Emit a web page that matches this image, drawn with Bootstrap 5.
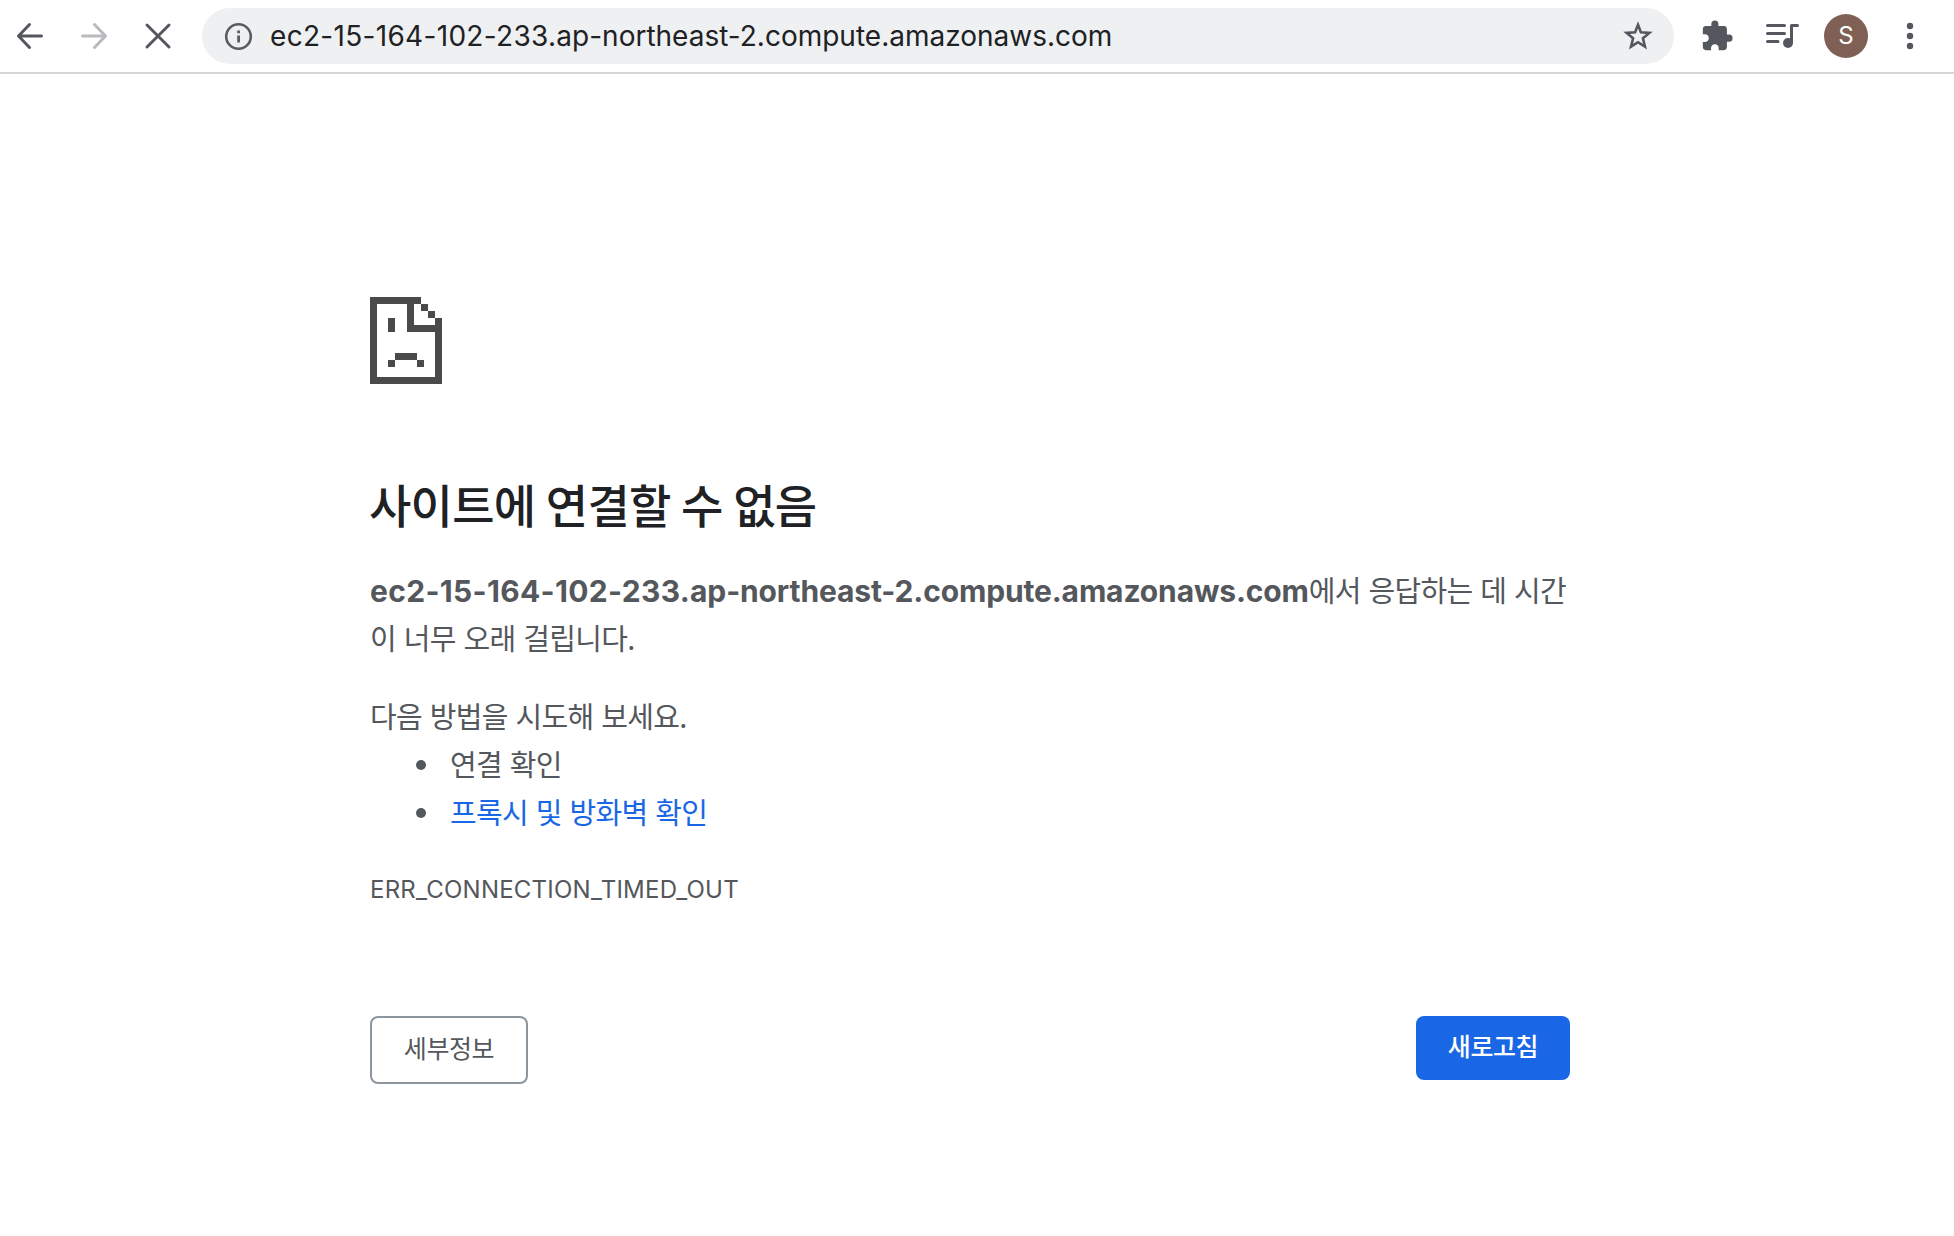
<!DOCTYPE html>
<html lang="ko">
<head>
<meta charset="utf-8">
<title>ec2-15-164-102-233.ap-northeast-2.compute.amazonaws.com</title>
<link href="https://cdn.jsdelivr.net/npm/bootstrap@5.3.0/dist/css/bootstrap.min.css" rel="stylesheet">
<style>
body{font-family:Inter,"Noto Sans CJK KR",sans-serif;color:#54575c;background:#fff;min-height:1236px;overflow:hidden}
.toolbar{height:74px;border-bottom:2px solid #d5d4d9;padding:0 28px 0 14px}
.toolbar svg{display:block;flex:none}
.nav-icons{width:188px;gap:32px}
.omnibox{width:1472px;height:56px;background:#eff0f2;padding:0 20px}
.address{font-size:28px;line-height:56px;color:#202124;margin-left:16px;white-space:nowrap}
.address .ip{letter-spacing:.31px}
.extensions{margin-left:26px}
.avatar{width:44px;height:44px;background:#806055;font-size:24px;line-height:44px;margin:0 26px 0 24px}
.error-main{width:1200px;margin-left:370px;padding-top:223px;font-size:30px;line-height:48px}
.ko{font-family:"Noto Sans CJK KR",sans-serif;font-size:29px;letter-spacing:-.68px;word-spacing:.3px}
.summary{white-space:nowrap}
.summary .ko{line-height:1}
.headline{font-family:"Noto Sans CJK KR",sans-serif;font-size:46px;font-weight:500;line-height:58px;letter-spacing:-.75px;word-spacing:-1.6px;color:#202124;margin:90px 0 35px -1px}
.host{font-weight:700;letter-spacing:-.14px}
.host .ip{letter-spacing:.33px}
.tips-title{margin:28px 0 0}
.tips{list-style:none;padding-left:80px;margin:0 0 31px}
.tips li{display:flex;align-items:center}
.tips li::before{content:"";width:10px;height:10px;border-radius:50%;background:#54575c;margin:3px 24px 0 -34px}
.tips a{color:#1a67e6}
.err-code{font-size:24px;line-height:48px;letter-spacing:.23px}
.actions{margin-top:102px}
.page-btn{font-family:"Noto Sans CJK KR",sans-serif;font-size:25px;letter-spacing:-.4px;line-height:36px;border-radius:8px;padding:0 0 7px}
.btn-details{width:158px;height:68px;border:2px solid #8d959c;color:#54575c}
.btn-reload{width:154px;height:64px;background:#1a67e6;color:#fff;border:0;font-weight:500}
</style>
</head>
<body>
<header class="toolbar d-flex align-items-center">
  <div class="nav-icons d-flex align-items-center">
    <svg width="32" height="32" viewBox="0 0 32 32" fill="none" stroke="#54585e" stroke-width="3" stroke-linecap="round" stroke-linejoin="round"><path d="M27.500 16H4.500M15.500 4.500L4.500 16L15.500 27.500"/></svg>
    <svg width="32" height="32" viewBox="0 0 32 32" fill="none" stroke="#b8babd" stroke-width="3" stroke-linecap="round" stroke-linejoin="round"><path d="M4.500 16H27.500M16.500 4.500L27.500 16L16.500 27.500"/></svg>
    <svg width="32" height="32" viewBox="0 0 32 32" fill="none" stroke="#54585e" stroke-width="3" stroke-linecap="round"><path d="M5 5L27 27M27 5L5 27"/></svg>
  </div>
  <div class="omnibox rounded-pill d-flex align-items-center">
    <svg width="32" height="32" viewBox="0 0 32 32"><circle cx="16.500" cy="16.500" r="12.300" fill="none" stroke="#5a5c60" stroke-width="2.600"/><path d="M15.200 15.500H18V22.500H15.200ZM15.200 10.500H18V13.300H15.200Z" fill="#5a5c60"/></svg>
    <div class="address"><span class="ip">ec2-15-164-102-233.</span>ap-northeast-2.compute.amazonaws.com</div>
    <svg class="ms-auto" width="32" height="32" viewBox="0 0 32 32" fill="none" stroke="#54585e" stroke-width="2.600"><path d="M16 4.800L18.900 12.300L27.400 12.900L20.900 18.200L23 26.700L16 22.200L9 26.700L11.100 18.200L4.600 12.900L13.100 12.300Z"/></svg>
  </div>
  <svg class="extensions" width="34" height="34" viewBox="0 0 24 24" fill="#54585e"><path d="M20.500 11H19V7c0-1.100-.9-2-2-2h-4V3.500a2.500 2.500 0 0 0-5 0V5H4c-1.100 0-1.990.9-1.990 2v3.800H3.500c1.490 0 2.700 1.210 2.700 2.700s-1.210 2.700-2.700 2.700H2V20c0 1.100.9 2 2 2h3.800v-1.500c0-1.490 1.210-2.700 2.700-2.700s2.700 1.210 2.700 2.700V22H17c1.100 0 2-.9 2-2v-4h1.500a2.500 2.500 0 0 0 0-5z"/></svg>
  <svg class="ms-auto" width="36" height="32" viewBox="0 0 36 32"><path d="M3.500 5.500H20.500M3.500 13.500H20.500M3.500 21.500H14M27.500 22V5.500H33.500" fill="none" stroke="#54585e" stroke-width="3" stroke-linecap="round" stroke-linejoin="round"/><circle cx="24" cy="23" r="5" fill="#54585e"/></svg>
  <div class="avatar rounded-circle text-white text-center">S</div>
  <svg width="32" height="32" viewBox="0 0 32 32" fill="#54585e"><circle cx="16" cy="6" r="3.200"/><circle cx="16" cy="16" r="3.200"/><circle cx="16" cy="26" r="3.200"/></svg>
</header>
<main class="error-main">
  <svg class="d-block" width="72" height="87" viewBox="0 0 72 87" fill="#4a4a4a" shape-rendering="crispEdges"><path d="M0 0H51V7H7V80H65V35H37V7H44V28H65V21H72V87H0ZM51 7H58V14H51ZM58 14H65V21H58ZM18 21H25V35H18ZM25 56H47V63H25ZM18 63H25V70H18ZM47 63H54V70H47Z"/></svg>
  <h1 class="headline">사이트에 연결할 수 없음</h1>
  <p class="summary mb-0"><span class="host"><span class="ip">ec2-15-164-102-233.</span>ap-northeast-2.compute.amazonaws.com</span><span class="ko">에서 응답하는 데 시간<br>이 너무 오래 걸립니다.</span></p>
  <p class="tips-title ko">다음 방법을 시도해 보세요.</p>
  <ul class="tips ko">
    <li>연결 확인</li>
    <li><a href="#" class="text-decoration-none">프록시 및 방화벽 확인</a></li>
  </ul>
  <div class="err-code">ERR_CONNECTION_TIMED_OUT</div>
  <div class="actions d-flex justify-content-between align-items-start">
    <button class="btn page-btn btn-details">세부정보</button>
    <button class="btn page-btn btn-reload">새로고침</button>
  </div>
</main>
<script src="https://cdn.jsdelivr.net/npm/bootstrap@5.3.0/dist/js/bootstrap.bundle.min.js"></script>
</body>
</html>
